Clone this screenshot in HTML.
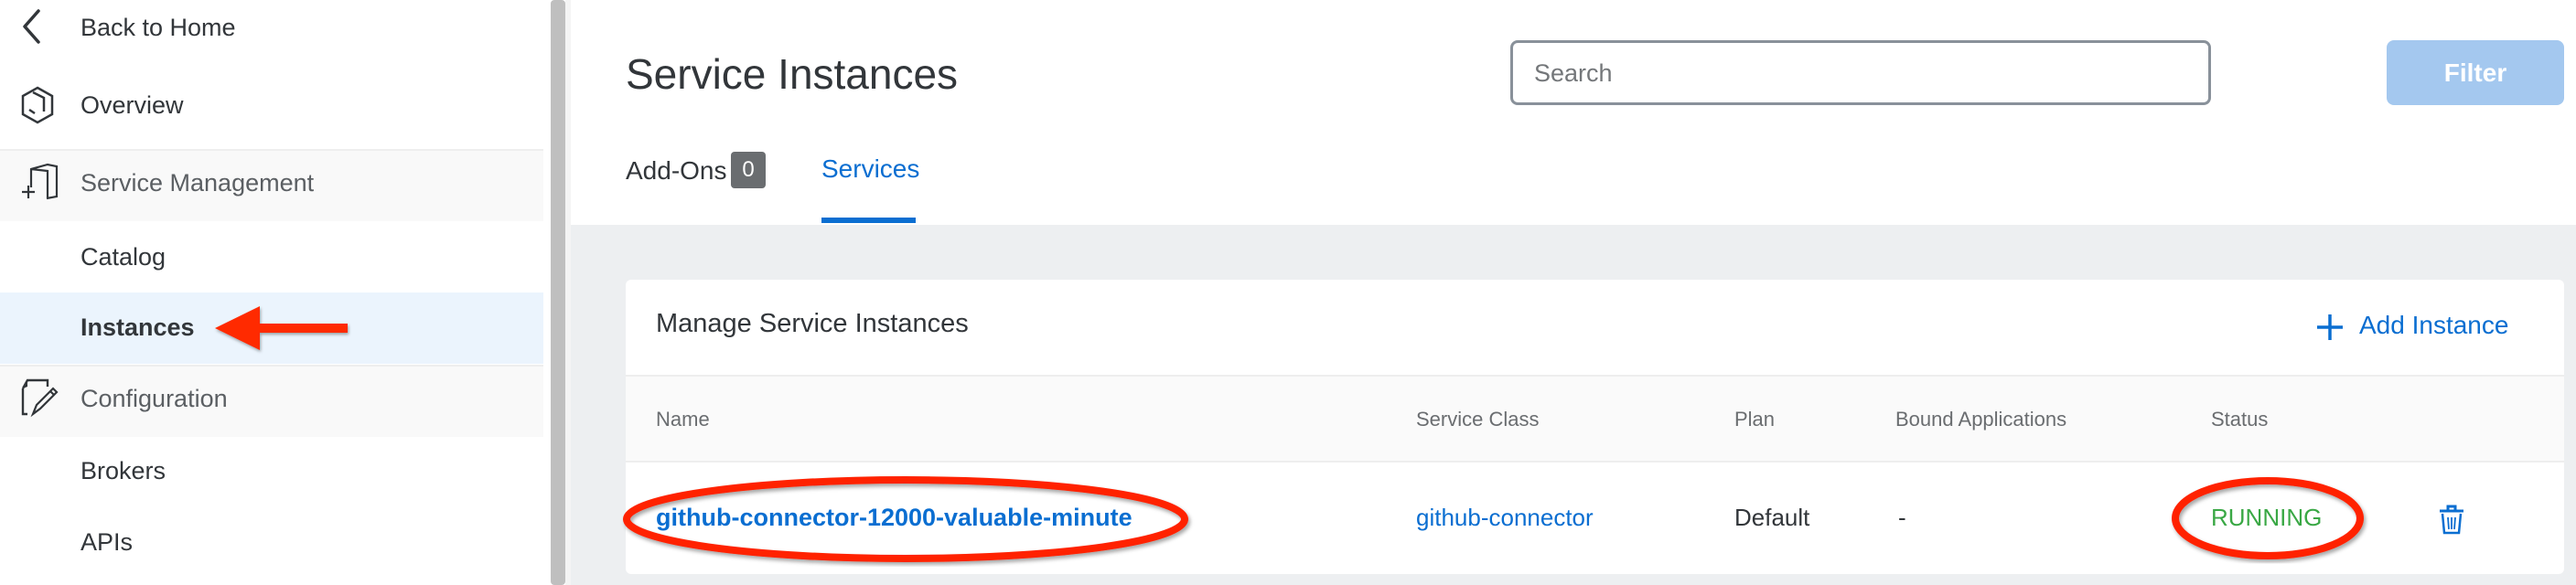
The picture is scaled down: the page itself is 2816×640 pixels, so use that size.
<!DOCTYPE html>
<html><head><meta charset="utf-8"><style>
*{margin:0;padding:0;box-sizing:border-box}
body{width:2816px;height:640px;overflow:hidden;background:#fff;font-family:"Liberation Sans",sans-serif;position:relative}
.a{position:absolute;white-space:nowrap}
.side{color:#32363a;font-size:27px;line-height:1}
.hd{color:#6a6d70;font-size:22px}
</style></head><body>
<div class="a" style="left:0;top:0;width:594px;height:640px;background:#fff"></div>
<div class="a" style="left:0;top:163px;width:594px;height:79px;background:#f9f9f9;border-top:2px solid #eeeeee"></div>
<div class="a" style="left:0;top:320px;width:594px;height:78px;background:#ebf4fd"></div>
<div class="a" style="left:0;top:399px;width:594px;height:79px;background:#f9f9f9;border-top:2px solid #eeeeee"></div>
<div class="a" style="left:594px;top:0;width:30px;height:640px;background:#fff"></div>
<div class="a" style="left:602px;top:0;width:16px;height:640px;background:#bfbfbf;border-radius:4px"></div>
<div class="a" style="left:618px;top:0;width:6px;height:640px;background:#f4f4f4"></div>

<svg class="a" style="left:22px;top:10px" width="24" height="38" viewBox="0 0 24 38"><path d="M20 2 L5 19 L20 36" fill="none" stroke="#32363a" stroke-width="3.5" stroke-linecap="round" stroke-linejoin="round"/></svg>
<div class="a side" style="left:88px;top:17px">Back to Home</div>

<svg class="a" style="left:22px;top:94px" width="38" height="42" viewBox="0 0 38 42"><path d="M19 2 L35 11 L35 31 L19 40 L3 31 L3 11 Z" fill="none" stroke="#32363a" stroke-width="2.5"/><path d="M14 7 L26 13 L26 28 M10 26 L16 30" fill="none" stroke="#32363a" stroke-width="2.5"/></svg>
<div class="a side" style="left:88px;top:102px">Overview</div>

<svg class="a" style="left:22px;top:177px" width="44" height="44" viewBox="0 0 44 44"><path d="M12 28 L12 8 L30 3 L40 5 L40 38 L29 40 M12 8 L30 10 L30 40" fill="none" stroke="#32363a" stroke-width="2.2"/><path d="M2 33 L16 33 M9 26 L9 40" stroke="#32363a" stroke-width="2.2"/></svg>
<div class="a side" style="left:88px;top:187px;color:#5b5f63">Service Management</div>
<div class="a side" style="left:88px;top:268px">Catalog</div>
<div class="a side" style="left:88px;top:345px;font-weight:bold">Instances</div>
<svg class="a" style="left:232px;top:332px" width="152" height="56" viewBox="0 0 152 56"><defs><filter id="sh"><feDropShadow dx="1" dy="2" stdDeviation="1.5" flood-opacity="0.35"/></filter></defs><path d="M3 27 L52 3 L52 22 L148 22 L148 32 L52 32 L52 51 Z" fill="#ff2a00" filter="url(#sh)"/></svg>

<svg class="a" style="left:22px;top:413px" width="44" height="44" viewBox="0 0 44 44"><path d="M3 12 L3 40 L8 40 M3 12 L8 3 L30 3 L30 10" fill="none" stroke="#32363a" stroke-width="2.4"/><path d="M8 3 L8 10 L3 12" fill="#32363a"/><path d="M14 40 L18 30 L36 12 L40 16 L22 34 Z M33 15 L37 19" fill="none" stroke="#32363a" stroke-width="2.2"/></svg>
<div class="a side" style="left:88px;top:423px;color:#5b5f63">Configuration</div>
<div class="a side" style="left:88px;top:502px">Brokers</div>
<div class="a side" style="left:88px;top:580px">APIs</div>

<div class="a" style="left:624px;top:246px;width:2192px;height:394px;background:#edeff1"></div>
<div class="a" style="left:684px;top:54px;font-size:46px;color:#32363a">Service Instances</div>
<div class="a" style="left:1651px;top:44px;width:766px;height:71px;border:3px solid #89919a;border-radius:8px"></div>
<div class="a" style="left:1677px;top:65px;font-size:27px;color:#74777a">Search</div>
<div class="a" style="left:2609px;top:44px;width:194px;height:71px;background:#a4c8ef;border-radius:8px;color:#fff;font-weight:bold;font-size:28px;text-align:center;line-height:71px">Filter</div>

<div class="a" style="left:684px;top:171px;font-size:28px;color:#32363a">Add-Ons</div>
<div class="a" style="left:799px;top:166px;width:38px;height:40px;background:#6a6d70;border-radius:4px;color:#fff;font-size:24px;text-align:center;line-height:40px">0</div>
<div class="a" style="left:898px;top:169px;font-size:28px;color:#0a6ed1">Services</div>
<div class="a" style="left:898px;top:238px;width:103px;height:6px;background:#0a6ed1"></div>

<div class="a" style="left:684px;top:306px;width:2119px;height:322px;background:#fff;border-radius:6px;overflow:hidden">
  <div class="a" style="left:0;top:104px;width:2119px;height:96px;background:#fafafa;border-top:2px solid #eeeeee;border-bottom:2px solid #eeeeee"></div>
</div>
<div class="a" style="left:717px;top:338px;font-size:29px;color:#32363a">Manage Service Instances</div>
<svg class="a" style="left:2533px;top:343px" width="28" height="30" viewBox="0 0 28 30"><path d="M14 1 L14 29 M0 15 L28 15" stroke="#0a6ed1" stroke-width="3.5"/></svg>
<div class="a" style="left:2579px;top:340px;font-size:28px;color:#0a6ed1">Add Instance</div>

<div class="a hd" style="left:717px;top:446px">Name</div>
<div class="a hd" style="left:1548px;top:446px">Service Class</div>
<div class="a hd" style="left:1896px;top:446px">Plan</div>
<div class="a hd" style="left:2072px;top:446px">Bound Applications</div>
<div class="a hd" style="left:2417px;top:446px">Status</div>

<div class="a" style="left:717px;top:551px;font-size:27px;font-weight:bold;color:#0a6ed1">github-connector-12000-valuable-minute</div>
<div class="a" style="left:1548px;top:551px;font-size:26px;color:#0a6ed1">github-connector</div>
<div class="a" style="left:1896px;top:551px;font-size:26px;color:#32363a">Default</div>
<div class="a" style="left:2075px;top:551px;font-size:26px;color:#32363a">-</div>
<div class="a" style="left:2417px;top:551px;font-size:26px;color:#3aa845">RUNNING</div>
<svg class="a" style="left:2666px;top:552px" width="28" height="33" viewBox="0 0 28 33"><path d="M1 7 L27 7 M10 6 L10 2 L18 2 L18 6" fill="none" stroke="#0a6ed1" stroke-width="3"/><path d="M4 10 L6 31 L22 31 L24 10" fill="none" stroke="#0a6ed1" stroke-width="2.5"/><path d="M10 14 L11 27 M14 14 L14 27 M18 14 L17 27" stroke="#0a6ed1" stroke-width="1.8"/></svg>

<svg class="a" style="left:0;top:0" width="2816" height="640"><defs><filter id="s2"><feDropShadow dx="2" dy="3" stdDeviation="2" flood-opacity="0.35"/></filter></defs>
<ellipse cx="990" cy="568" rx="305" ry="43" fill="none" stroke="#ff2200" stroke-width="8" filter="url(#s2)"/>
<ellipse cx="2479" cy="567" rx="101" ry="41" fill="none" stroke="#ff2200" stroke-width="8" filter="url(#s2)"/>
</svg>
</body></html>
